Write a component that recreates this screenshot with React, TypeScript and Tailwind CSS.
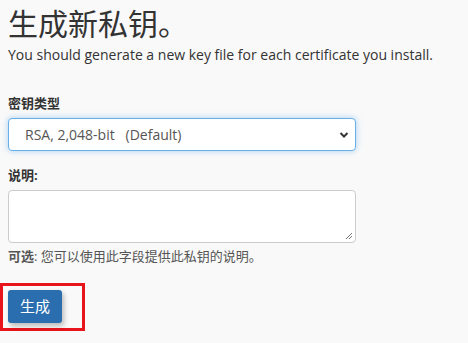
import React from "react";

const sans = "font-['Open_Sans','Noto_Sans_CJK_SC',sans-serif]";

export default function App() {
  return (
    <div className={`w-[468px] h-[343px] bg-[#f9f9f9] text-[#333] ${sans} px-2 pt-[6px] overflow-hidden`}>
      <h1 className="text-[30px] leading-[36px] font-normal text-[#333] m-0">生成新私钥。</h1>
      <p className="text-[14px] leading-[20px] text-[#333] mt-[3px]">
        You should generate a new key file for each certificate you install.
      </p>
      <div className="mt-[28px]">
        <label className="block text-[13px] leading-[20px] font-bold text-[#333]">密钥类型</label>
        <div className="relative mt-[5px] w-[348px] h-[33px] rounded-[4px] border border-[#66afe9] bg-white shadow-[0_0_6px_rgba(102,175,233,0.55)] flex items-center">
          <span className="pl-4 text-[14px] text-[#555] whitespace-pre">RSA, 2,048-bit   (Default)</span>
          <svg className="absolute right-[6px] top-[12px]" width="10" height="8" viewBox="0 0 10 8">
            <path d="M1.5 2 L5 5.5 L8.5 2" fill="none" stroke="#333" strokeWidth="2" />
          </svg>
        </div>
      </div>
      <div className="mt-[14px]">
        <label className="block text-[13px] leading-[20px] font-bold text-[#333]">说明:</label>
        <div className="relative mt-[5px] w-[348px] h-[53px] rounded-[4px] border border-[#ccc] bg-white">
          <svg className="absolute right-[2px] bottom-[2px]" width="8" height="8" viewBox="0 0 8 8">
            <path d="M7 1 L1 7 M7 4 L4 7" stroke="#777" strokeWidth="1" />
          </svg>
        </div>
        <p className="mt-[3px] text-[13px] leading-[20px] text-[#555]">
          <span className="font-bold">可选</span>: 您可以使用此字段提供此私钥的说明。
        </p>
      </div>
      <div className="mt-[17px] -ml-2 w-[85px] h-[48px] border-[3px] border-[#e8141c] pl-[5px] pt-[4px]">
        <button className="w-[54px] h-[33px] rounded-[3px] bg-[#2a6eb0] text-white text-[15px] shadow-[2px_3px_5px_rgba(0,0,0,0.25)]">
          生成
        </button>
      </div>
    </div>
  );
}
